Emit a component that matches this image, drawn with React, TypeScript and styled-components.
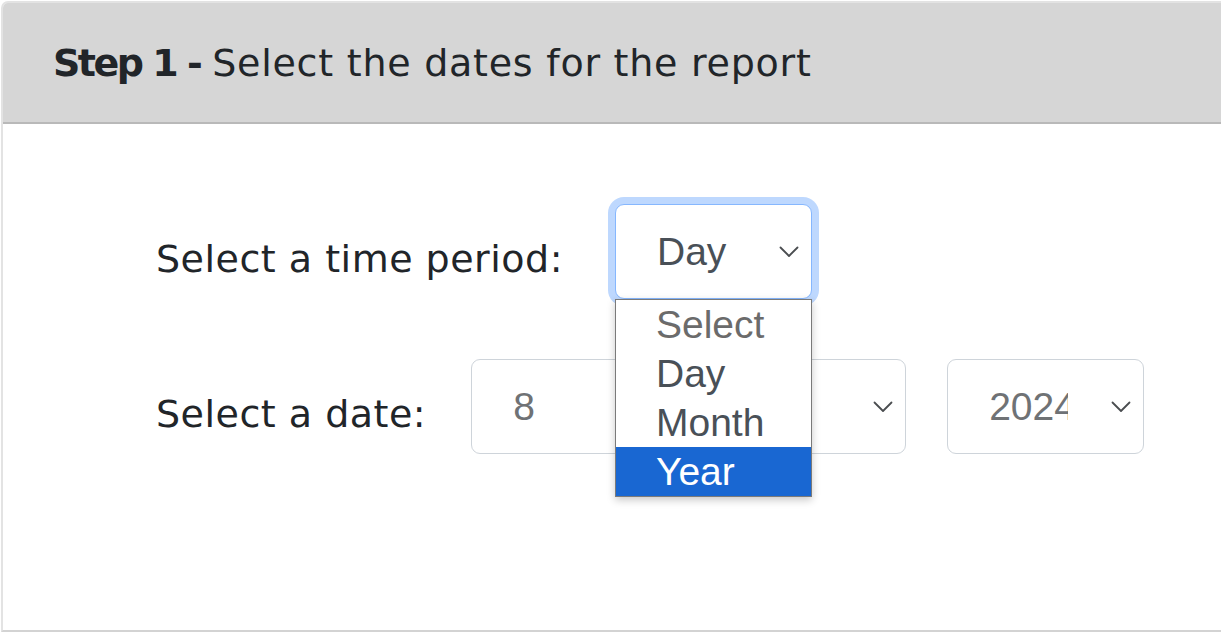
import React from "react";
import styled, { createGlobalStyle, css } from "styled-components";

const GlobalStyle = createGlobalStyle`
  html, body {
    margin: 0;
    padding: 0;
    background: #ffffff;
    overflow: hidden;
  }
  body {
    font-family: "DejaVu Sans", sans-serif;
    color: #212529;
  }
`;

const Card = styled.section`
  box-sizing: border-box;
  margin: 1px 0 0 1px;
  width: 1260px;
  height: 631px;
  border: 2px solid #e3e3e3;
  border-bottom-color: #d3d3d3;
  border-radius: 7px 7px 0 0;
  background: #ffffff;
  display: flex;
  flex-direction: column;
`;

const Header = styled.header`
  box-sizing: border-box;
  height: 121px;
  background: #d6d6d6;
  border-bottom: 2px solid #b9b9b9;
  border-radius: 5px 5px 0 0;
  display: flex;
  align-items: center;
  padding: 0 0 0 50px;
  font-family: "DejaVu Sans", sans-serif;
  font-size: 38px;
  color: #212529;
  white-space: nowrap;
`;

const StepLabel = styled.strong`
  font-weight: 700;
  letter-spacing: -2.5px;
  margin-right: 12px;
`;

const Title = styled.span`
  font-weight: 400;
  letter-spacing: 0.75px;
`;

const Body = styled.div`
  display: flex;
  flex-direction: column;
  gap: 60px;
  padding: 80px 0 0 153px;
`;

const Row = styled.div<{ $gap: number }>`
  display: flex;
  align-items: center;
  gap: ${(p) => p.$gap}px;
`;

const Label = styled.label`
  font-family: "DejaVu Sans", sans-serif;
  font-size: 38px;
  letter-spacing: 0.5px;
  color: #212529;
  padding-top: 14px;
  white-space: nowrap;
`;

const SelectGroup = styled.div`
  display: flex;
  gap: 41px;
`;

const SelectBox = styled.div<{ $focused?: boolean }>`
  position: relative;
  box-sizing: border-box;
  width: 197px;
  height: 95px;
  border: 1px solid #ced4da;
  border-radius: 9px;
  background: #ffffff;
  padding: 0 75px 0 41px;
  display: flex;
  align-items: center;
  font-family: "Liberation Sans", Arial, sans-serif;
  font-size: 39px;
  color: #6f7275;
  ${(p) =>
    p.$focused &&
    css`
      border-color: #86b7fe;
      box-shadow: 0 0 0 7px rgba(13, 110, 253, 0.27);
      color: #495057;
    `}
`;

const Value = styled.span`
  display: block;
  overflow: hidden;
  white-space: nowrap;
  width: 100%;
`;

const Chevron = styled.svg`
  position: absolute;
  right: 12px;
  top: 50%;
  width: 20px;
  height: 12px;
  margin-top: -6px;
`;

const OptionList = styled.ul`
  position: absolute;
  top: calc(100% + 1px);
  left: -1px;
  width: 197px;
  box-sizing: border-box;
  margin: 0;
  padding: 0;
  list-style: none;
  background: #ffffff;
  border: 1px solid #7a7a7a;
  box-shadow: 0 3px 8px rgba(0, 0, 0, 0.22);
  z-index: 10;
`;

const Option = styled.li<{ $selected?: boolean; $muted?: boolean }>`
  height: 49px;
  line-height: 49px;
  padding-left: 40px;
  font-family: "Liberation Sans", Arial, sans-serif;
  font-size: 39px;
  color: ${(p) => (p.$selected ? "#ffffff" : p.$muted ? "#6b6b6b" : "#495057")};
  background: ${(p) => (p.$selected ? "#1967d2" : "transparent")};
`;

const ChevronIcon = () => (
  <Chevron viewBox="0 0 20 12" fill="none">
    <polyline
      points="1.5,1.5 10,10 18.5,1.5"
      stroke="#4a4d50"
      strokeWidth="1.8"
      strokeLinecap="round"
      strokeLinejoin="round"
    />
  </Chevron>
);

const Select = ({
  value,
  focused,
  children,
}: {
  value: string;
  focused?: boolean;
  children?: React.ReactNode;
}) => (
  <SelectBox $focused={focused}>
    <Value>{value}</Value>
    <ChevronIcon />
    {children}
  </SelectBox>
);

export default function App() {
  const options = ["Select", "Day", "Month", "Year"];
  return (
    <>
      <GlobalStyle />
      <Card>
        <Header>
          <StepLabel>Step 1 -</StepLabel>
          <Title>Select the dates for the report</Title>
        </Header>
        <Body>
          <Row $gap={52}>
            <Label>Select a time period:</Label>
            <Select value="Day" focused>
              <OptionList>
                {options.map((o, i) => (
                  <Option key={o} $muted={i === 0} $selected={o === "Year"}>
                    {o}
                  </Option>
                ))}
              </OptionList>
            </Select>
          </Row>
          <Row $gap={45}>
            <Label>Select a date:</Label>
            <SelectGroup>
              <Select value="8" />
              <Select value="8" />
              <Select value="2024" />
            </SelectGroup>
          </Row>
        </Body>
      </Card>
    </>
  );
}
